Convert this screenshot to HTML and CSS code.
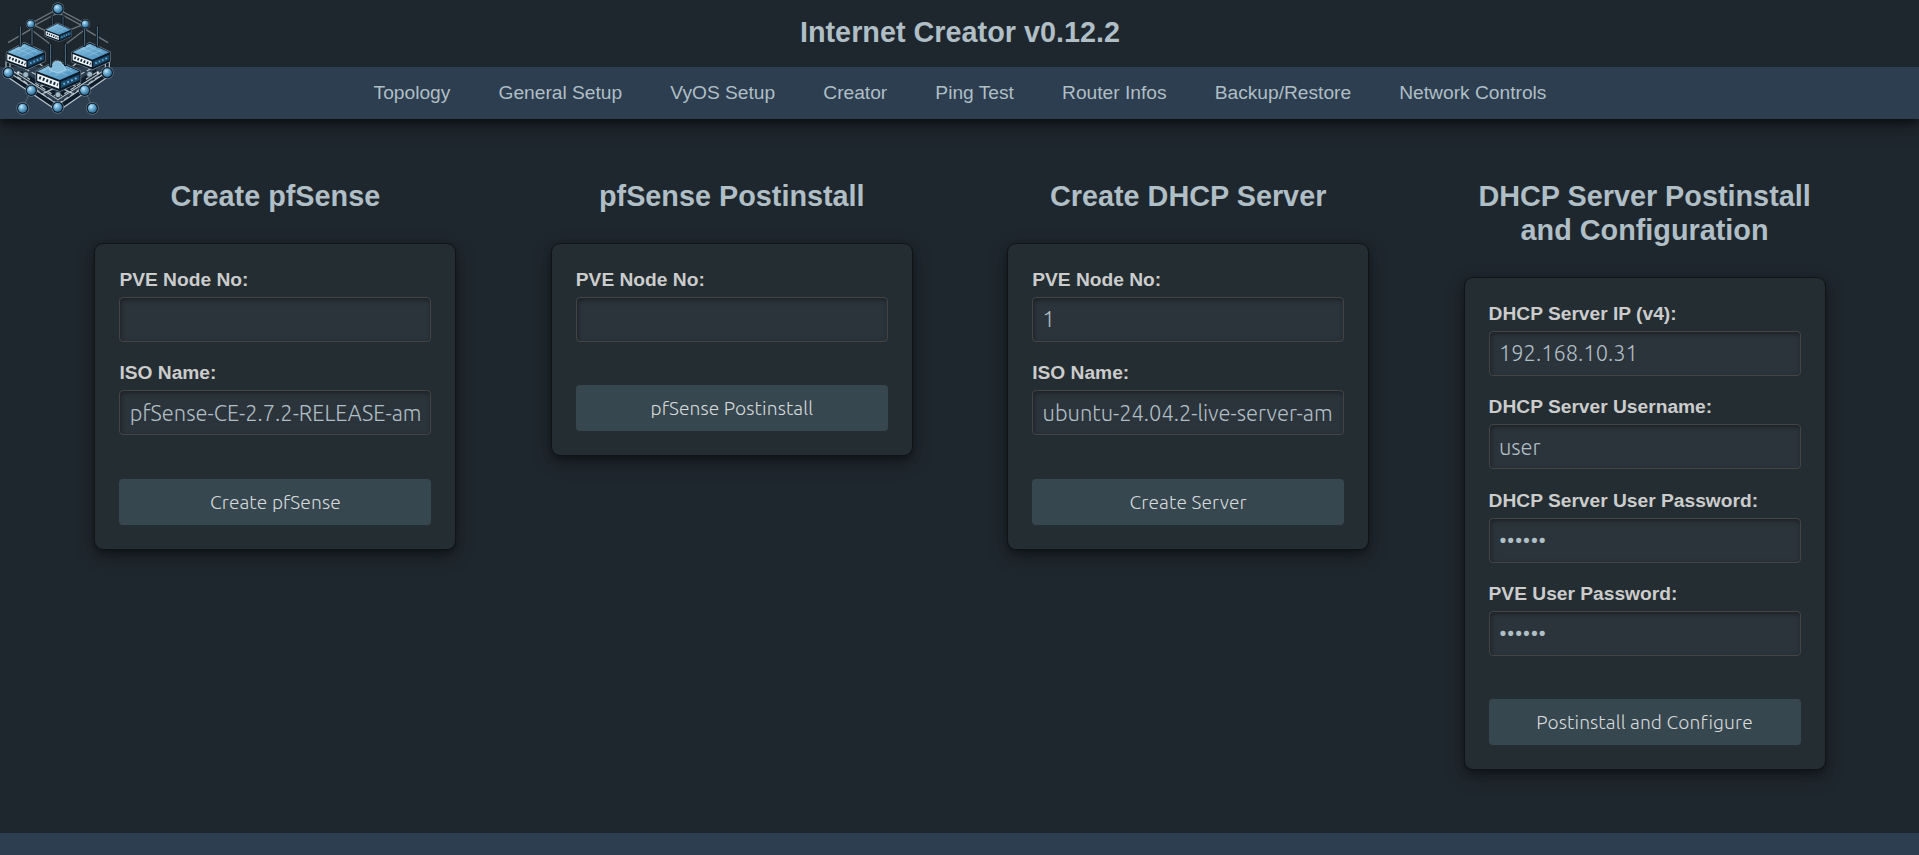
FILE: index.html
```html
<!DOCTYPE html>
<html lang="en">
<head>
<meta charset="utf-8">
<title>Internet Creator v0.12.2</title>
<link rel="stylesheet" href="styles.css">
</head>
<body>
<header class="header">
  <h1 class="title">Internet Creator v0.12.2</h1>
  <nav class="nav">
    <a>Topology</a><a>General Setup</a><a>VyOS Setup</a><a>Creator</a><a>Ping Test</a><a>Router Infos</a><a>Backup/Restore</a><a>Network Controls</a>
  </nav>
  <svg class="logo" viewBox="0 0 390 390" aria-hidden="true">
    <defs>
      <radialGradient id="ball" cx=".36" cy=".32" r=".7"><stop offset="0" stop-color="#c9e8f7"/><stop offset=".4" stop-color="#74b2d6"/><stop offset="1" stop-color="#2f6c98"/></radialGradient>
      <linearGradient id="top" x1="0" y1="0" x2="1" y2=".6"><stop offset="0" stop-color="#9dcbe6"/><stop offset=".5" stop-color="#69a9d0"/><stop offset="1" stop-color="#5193c0"/></linearGradient>
      <g id="node"><circle r="19" fill="#8b9ca8" opacity=".6"/><circle r="17" fill="#0b1a28"/><circle r="13.5" fill="url(#ball)"/></g>
      <g id="router">
        <path d="M-55-2 -4-30 55-3V21L4 44-55 22Z" fill="#0b1a28" stroke="#84939d" stroke-width="9" stroke-linejoin="round"/>
        <path d="M-55-2 -4-30 55-3V21L4 44-55 22Z" fill="#0b1a28" stroke="#0b1a28" stroke-width="6" stroke-linejoin="round"/>
        <path d="M-55-4 -4-30 55-4 4 18Z" fill="url(#top)"/>
        <path d="M-40-6 0-25M-24-1 18-20M-8 6 34-12M-30-17 22 5M-14-25 38-2" stroke="#b7dcef" stroke-width="2.5" opacity=".45"/>
        <path d="M-55 1 2 23V41L-55 20Z" fill="#edf3f6"/>
        <path d="M-50 12 -1 31" stroke="#142a3c" stroke-width="8" stroke-dasharray="5 5"/>
        <path d="M7 23 55 3V18L7 40Z" fill="#1c4a6c"/>
        <path d="M13 29 51 12" stroke="#6db3dc" stroke-width="5" stroke-dasharray="5 6"/>
      </g>
    </defs>
    <g fill="none" stroke="#69747c" stroke-width="4">
      <path d="M92 71 173 27 256 71M92 82 174 38 256 82M24 128 92 88 154 135M194 135 256 88 324 128M92 71 136 92M256 71 214 88"/>
      <path d="M92 272 68 325M256 272 277 325" stroke-width="2"/>
    </g>
    <g fill="none" stroke="#0f1d2a" stroke-width="18"><path d="M24 184V218L174 322 322 218V184"/><path d="M60 220 174 290 292 215"/></g>
    <g fill="none" stroke="#b9c4cb" stroke-width="3.5">
      <path d="M18 184V211L174 314 328 211V184M30 184V207M316 184V207M24 232 174 334 322 232M42 215 174 299 306 215"/>
      <path d="M60 218 92 240M288 218 255 240M52 230 166 308M296 230 180 308M106 250 165 288M242 250 182 288M116 190 130 200M230 190 216 200M56 196 116 228M292 196 232 228" stroke-dasharray="14 8"/>
      <path d="M120 260 144 248M228 260 204 248M130 280 168 262M218 280 180 262" stroke-width="4"/>
    </g>
    <g stroke="#0b1824" stroke-width="9" stroke-linecap="round"><path d="M157 50V75M189 50V75"/></g>
    <g stroke="#536878" stroke-width="2.5" stroke-linecap="round"><path d="M157 50V75M189 50V75"/></g>
    <use href="#router" transform="translate(175 92) scale(.69)"/>
    <use href="#router" transform="translate(77 161)"/>
    <use href="#router" transform="translate(273 161)"/>
    <use href="#router" transform="translate(175 219) scale(1.15)"/>
    <path d="M148 210V203Q149 195 157 194 161 183 173 184 184 184 188 194 197 198 196 210L173 219Z" fill="#86bddc" stroke="#b7dced" stroke-width="2"/>
    <g stroke="#0b1824" stroke-width="9" stroke-linecap="round"><path d="M61 80V136M96 76V136M254 78V136M292 80V138M152 133V198M196 133V194"/></g>
    <g stroke="#5d7484" stroke-width="3" stroke-linecap="round"><path d="M61 80V136M96 76V136M254 78V136M292 80V138M152 133V198M196 133V194"/></g>
    <use href="#node" x="174" y="26"/>
    <use href="#node" transform="translate(92 72) scale(.78)"/>
    <use href="#node" transform="translate(256 72) scale(.78)"/>
    <use href="#node" x="25" y="218"/><use href="#node" x="322" y="218"/>
    <use href="#node" x="94" y="271"/><use href="#node" x="254" y="271"/>
    <use href="#node" x="173" y="322"/><use href="#node" x="68" y="325"/><use href="#node" x="277" y="325"/>
    <g fill="#9db7c6" stroke="#15232e" stroke-width="2"><circle cx="77" cy="224" r="9"/><circle cx="269" cy="223" r="9"/><circle cx="174" cy="284" r="9"/></g>
    <g fill="#d3dde3"><circle cx="55" cy="218" r="4"/><circle cx="293" cy="218" r="4"/></g>
  </svg>
</header>

<main class="main">
  <section class="column">
    <h2 class="heading">Create pfSense</h2>
    <form class="card">
      <div class="field"><label>PVE Node No:</label><input type="text"></div>
      <div class="field"><label>ISO Name:</label><input type="text" value="pfSense-CE-2.7.2-RELEASE-am"></div>
      <button class="btn" type="button">Create pfSense</button>
    </form>
  </section>
  <section class="column">
    <h2 class="heading">pfSense Postinstall</h2>
    <form class="card">
      <div class="field"><label>PVE Node No:</label><input type="text"></div>
      <button class="btn" type="button">pfSense Postinstall</button>
    </form>
  </section>
  <section class="column">
    <h2 class="heading">Create DHCP Server</h2>
    <form class="card">
      <div class="field"><label>PVE Node No:</label><input type="text" value="1"></div>
      <div class="field"><label>ISO Name:</label><input type="text" value="ubuntu-24.04.2-live-server-am"></div>
      <button class="btn" type="button">Create Server</button>
    </form>
  </section>
  <section class="column">
    <h2 class="heading">DHCP Server Postinstall and Configuration</h2>
    <form class="card">
      <div class="field"><label>DHCP Server IP (v4):</label><input type="text" value="192.168.10.31"></div>
      <div class="field"><label>DHCP Server Username:</label><input type="text" value="user"></div>
      <div class="field"><label>DHCP Server User Password:</label><input type="password" value="secret"></div>
      <div class="field"><label>PVE User Password:</label><input type="password" value="secret"></div>
      <button class="btn" type="button">Postinstall and Configure</button>
    </form>
  </section>
</main>
<footer class="footer"></footer>
</body>
</html>
```
FILE: styles.css
```css
* { box-sizing: border-box; }
body {
  margin: 0;
  height: 855px;
  display: flex;
  flex-direction: column;
  overflow: hidden;
  background: #1f272e;
  color: #b0bec5;
  font-family: "Liberation Sans", Arial, sans-serif;
  font-size: 19.2px;
}
.header {
  position: relative;
  flex: none;
  height: 119px;
  box-shadow: 0 4px 8px rgba(0, 0, 0, .5), 0 6px 20px rgba(0, 0, 0, .3);
}
.title {
  margin: 0;
  height: 67px;
  padding-left: 1px;
  line-height: 64px;
  font-size: 28.8px;
  text-align: center;
}
.nav {
  height: 52px;
  padding-left: 1px;
  display: flex;
  justify-content: center;
  align-items: center;
  gap: 48.1px;
  background: #2c3e50;
}
.logo {
  position: absolute;
  left: 0;
  top: 0;
  width: 130px;
  height: 130px;
}
.main {
  flex: 1;
  display: flex;
  gap: 96.4px;
  padding: 60px 0 0 95.4px;
}
.column { flex: none; width: 360px; }
.heading {
  margin: 0 0 31px;
  font-size: 28.8px;
  line-height: 34px;
  text-align: center;
}
.card {
  padding: 24px;
  border-radius: 8px;
  background: #232d32;
  box-shadow: 0 0 0 1px #101416, 0 4px 8px rgba(0, 0, 0, .4), 0 6px 20px rgba(0, 0, 0, .3);
}
.field { height: 93.35px; }
.field label {
  display: block;
  height: 29.05px;
  line-height: 23px;
  font-weight: bold;
  color: #ccc;
}
.field input {
  display: block;
  width: 312px;
  height: 45px;
  padding: 0 8px .6px 9.4px;
  border: 1px solid #444;
  border-radius: 4px;
  outline: 0;
  background: #2c343b;
  color: #b0bec5;
  box-shadow: inset 1px 2px 5px rgba(0, 0, 0, .4);
  font: 300 21.85px Ubuntu, "Open Sans", sans-serif;
}
.btn {
  display: block;
  width: 312px;
  height: 46px;
  margin-top: 23.95px;
  padding: 0;
  border: 0;
  border-radius: 4px;
  background: #37474f;
  color: #d5d9db;
  font: 300 19.2px Ubuntu, "Open Sans", sans-serif;
  letter-spacing: .1px;
}
.footer { flex: none; height: 22px; background: #2c3e50; }
```
